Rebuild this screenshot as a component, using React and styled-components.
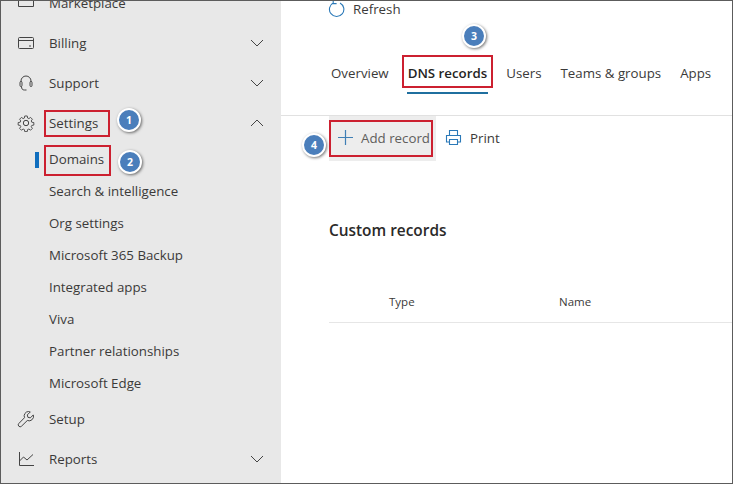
import React from "react";
import styled, { createGlobalStyle } from "styled-components";

const Global = createGlobalStyle`
  html, body { margin: 0; padding: 0; background: #fff; }
  body { font-family: "Open Sans", "Noto Sans", "Liberation Sans", sans-serif; }
`;

const Frame = styled.div`
  position: relative;
  width: 733px;
  height: 484px;
  box-sizing: border-box;
  border: 1px solid #5c5c5c;
  display: flex;
  overflow: hidden;
  background: #fff;
  color: #323130;
`;

const Side = styled.nav`
  width: 280px;
  flex: none;
  background: #e8e8e8;
  display: flex;
  flex-direction: column;
  margin-top: -18px;
  height: 520px;
`;

const Row = styled.div`
  position: relative;
  height: ${(p) => p.$h || 40}px;
  flex: none;
  display: flex;
  align-items: center;
  font-size: 13.3px;
  color: #3b3a39;
  padding-left: ${(p) => (p.$sub ? 48 : 16)}px;
`;

const IconSlot = styled.span`
  width: 32px;
  height: 20px;
  flex: none;
  display: flex;
  align-items: center;
  color: #444;
`;

const Label = styled.span`
  flex: 1;
  white-space: nowrap;
`;

const Chevron = styled.svg`
  width: 14px;
  height: 8px;
  margin-right: 17px;
  flex: none;
  fill: none;
  stroke: #444;
  stroke-width: 1;
`;

const ActiveBar = styled.span`
  position: absolute;
  left: 34px;
  top: 9px;
  width: 4px;
  height: 16px;
  background: #106ebe;
`;

const Main = styled.main`
  flex: 1;
  min-width: 0;
  display: flex;
  flex-direction: column;
`;

const Refresh = styled.div`
  height: 16px;
  padding-left: 47px;
  display: flex;
  align-items: center;
  gap: 8px;
  font-size: 13.3px;
  color: #3b3a39;
`;

const Tabs = styled.div`
  display: flex;
  align-items: center;
  margin-top: 36px;
  padding-left: 49px;
  gap: 17px;
  height: 40px;
`;

const Tab = styled.div`
  position: relative;
  font-size: 13.3px;
  font-weight: ${(p) => (p.$active ? 600 : 400)};
  color: ${(p) => (p.$active ? "#252423" : "#3b3a39")};
  padding: 0 1px;
  white-space: nowrap;
  ${(p) =>
    p.$active &&
    `&::after {
      content: "";
      position: absolute;
      left: 0;
      right: 0;
      bottom: -12px;
      height: 2px;
      background: #1f6f9f;
    }`}
`;

const Toolbar = styled.div`
  margin-top: 22px;
  border-top: 1px solid #e1e1e1;
  height: 45px;
  display: flex;
  align-items: stretch;
  padding-left: 48px;
`;

const ToolButton = styled.div`
  display: flex;
  align-items: center;
  gap: ${(p) => (p.$hover ? 7 : 8)}px;
  padding: 0 ${(p) => (p.$hover ? 6 : 8)}px 2px ${(p) => (p.$hover ? 8 : 9)}px;
  background: ${(p) => (p.$hover ? "#ededed" : "transparent")};
  font-size: 13.3px;
  color: ${(p) => (p.$hover ? "#605e5c" : "#3b3a39")};
  white-space: nowrap;
`;

const SectionTitle = styled.h2`
  margin: 60px 0 0 48px;
  font-size: 15.4px;
  line-height: 20px;
  font-weight: 600;
  color: #2b2a29;
`;

const TableHead = styled.div`
  margin: 40px 0 0 48px;
  height: 42px;
  box-sizing: border-box;
  border-bottom: 1px solid #e6e6e6;
  display: grid;
  grid-template-columns: 170px 1fr;
  padding-left: 60px;
  font-size: 11.5px;
  color: #3b3a39;
  align-items: center;
  padding-bottom: 1px;
`;

const Box = styled.div`
  position: absolute;
  border: 2px solid #cc2030;
  box-sizing: border-box;
  pointer-events: none;
`;

const Badge = styled.div`
  position: absolute;
  width: 20px;
  height: 20px;
  border-radius: 50%;
  background: #4a7ebb;
  border: 2px solid #fff;
  box-sizing: content-box;
  box-shadow: 1px 1px 3px rgba(0, 0, 0, 0.55);
  color: #fff;
  font: 700 10.5px/20px "Open Sans", sans-serif;
  text-align: center;
`;

const stroke = { fill: "none", stroke: "currentColor", strokeWidth: 1 };

const Down = () => (
  <Chevron viewBox="0 0 14 8"><path d="M1 1l6 6 6-6" /></Chevron>
);
const Up = () => (
  <Chevron viewBox="0 0 14 8"><path d="M1 7l6-6 6 6" /></Chevron>
);

const Market = () => (
  <svg width="18" height="18" viewBox="0 0 18 18" {...stroke}>
    <path d="M1.5 0v12.5h15V0" />
  </svg>
);
const Card = () => (
  <svg width="18" height="14" viewBox="0 0 18 14" {...stroke}>
    <rect x="1.5" y="1.5" width="15" height="11" rx="1" />
    <path d="M1.5 4.5h15M12 10h2" />
  </svg>
);
const Headset = () => (
  <svg width="18" height="18" viewBox="0 0 18 18" {...stroke}>
    <path d="M4 8V7a5 5 0 0 1 10 0v1" />
    <rect x="3" y="7.5" width="2" height="5" rx="1" />
    <rect x="13" y="7.5" width="2" height="5" rx="1" />
    <path d="M4.5 12.5c0 2.5 1 3.5 3 3.5h2" />
  </svg>
);
const Gear = () => (
  <svg width="18" height="18" viewBox="0 0 18 18" {...stroke}>
    <circle cx="9" cy="9" r="2.7" />
    <path d="M7.6 1.2h2.8l.4 2.3 1.4.6 1.9-1.3 2 2-1.3 1.9.6 1.4 2.3.4v2.8l-2.3.4-.6 1.4 1.3 1.9-2 2-1.9-1.3-1.4.6-.4 2.3H7.6l-.4-2.3-1.4-.6-1.9 1.3-2-2 1.3-1.9-.6-1.4-2.3-.4V8.5l2.3-.4.6-1.4-1.3-1.9 2-2 1.9 1.3 1.4-.6z" transform="translate(.9 .9) scale(.9)" />
  </svg>
);
const Wrench = () => (
  <svg width="18" height="18" viewBox="0 0 18 18" {...stroke}>
    <path d="M11.5 1.5a4.5 4.5 0 0 0-4 6.2L1.8 13.5a1.9 1.9 0 0 0 2.7 2.7l5.8-5.7a4.5 4.5 0 0 0 6-5.6l-3 3-2.4-.6-.6-2.4 3-3a4.5 4.5 0 0 0-1.8-.4z" />
  </svg>
);
const Chart = () => (
  <svg width="18" height="18" viewBox="0 0 18 18" {...stroke}>
    <path d="M2.5 2v13.5h14.5M2.5 11l4-4 3.5 3 6-5.5" />
  </svg>
);
const RefreshIcon = () => (
  <svg width="17" height="17" viewBox="0 0 17 17" fill="none" stroke="#2b79b8" strokeWidth="1.1">
    <path d="M5.5 1.8a7.2 7.2 0 1 0 6.5.1M5.2 -1v3.6h3.4" />
  </svg>
);
const Plus = () => (
  <svg width="17" height="17" viewBox="0 0 17 17" stroke="#3f7fb5" strokeWidth="1.2">
    <path d="M8.5 1v15M1 8.5h15" />
  </svg>
);
const Printer = () => (
  <svg width="17" height="17" viewBox="0 0 17 17" fill="none" stroke="#2b79b8" strokeWidth="1.1">
    <path d="M4.5 6.5v-5h8v5M4 13H1.5V6.5h14V13H13" />
    <path d="M4.5 10.5h8v5h-8z" />
  </svg>
);

const rows = [
  { label: "Marketplace", icon: <Market /> },
  { label: "Billing", icon: <Card />, chev: <Down /> },
  { label: "Support", icon: <Headset />, chev: <Down /> },
  { label: "Settings", icon: <Gear />, chev: <Up /> },
];
const subs = [
  "Domains",
  "Search & intelligence",
  "Org settings",
  "Microsoft 365 Backup",
  "Integrated apps",
  "Viva",
  "Partner relationships",
  "Microsoft Edge",
];

const marks = [
  [44, 110, 66, 27],
  [44, 145, 67, 31],
  [402, 55, 91, 33],
  [329, 120, 104, 37],
];
const badges = [
  [117, 108, "1"],
  [118, 150, "2"],
  [462, 24, "3"],
  [302, 133, "4"],
];

export default function App() {
  return (
    <>
      <Global />
      <Frame>
        <Side>
          {rows.map((r) => (
            <Row key={r.label}>
              <IconSlot>{r.icon}</IconSlot>
              <Label>{r.label}</Label>
              {r.chev}
            </Row>
          ))}
          {subs.map((s, i) => (
            <Row key={s} $sub $h={32}>
              {i === 0 && <ActiveBar />}
              <Label>{s}</Label>
            </Row>
          ))}
          <Row>
            <IconSlot><Wrench /></IconSlot>
            <Label>Setup</Label>
          </Row>
          <Row>
            <IconSlot><Chart /></IconSlot>
            <Label>Reports</Label>
            <Down />
          </Row>
        </Side>
        <Main>
          <Refresh><RefreshIcon />Refresh</Refresh>
          <Tabs>
            <Tab>Overview</Tab>
            <Tab $active>DNS records</Tab>
            <Tab>Users</Tab>
            <Tab>Teams &amp; groups</Tab>
            <Tab>Apps</Tab>
          </Tabs>
          <Toolbar>
            <ToolButton $hover><Plus />Add record</ToolButton>
            <ToolButton><Printer />Print</ToolButton>
          </Toolbar>
          <SectionTitle>Custom records</SectionTitle>
          <TableHead><span>Type</span><span>Name</span></TableHead>
        </Main>
        {marks.map(([x, y, w, h], i) => (
          <Box key={i} style={{ left: x - 1, top: y - 1, width: w, height: h }} />
        ))}
        {badges.map(([x, y, t]) => (
          <Badge key={t} style={{ left: x - 1, top: y - 1 }}>{t}</Badge>
        ))}
      </Frame>
    </>
  );
}
